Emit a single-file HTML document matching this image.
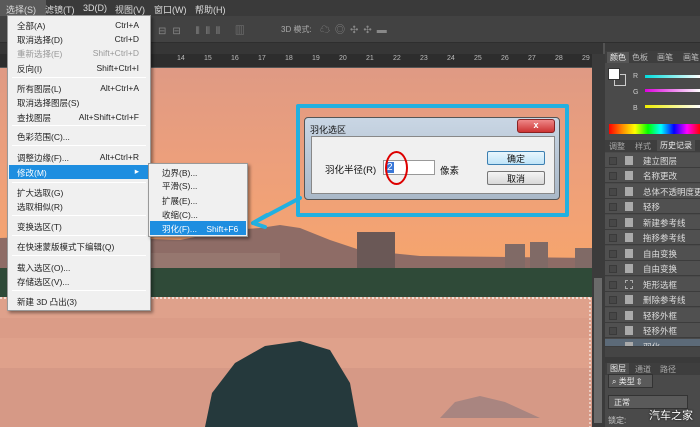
<!DOCTYPE html>
<html style="overflow:hidden;height:427px"><head><meta charset="utf-8"><style>
*{margin:0;padding:0;box-sizing:border-box}
body{width:700px;height:427px;overflow:hidden;background:#535353;font-family:"Liberation Sans","Noto Sans CJK SC",sans-serif;font-size:9px;position:relative;color:#ddd}
.abs{position:absolute}
#menubar{left:0;top:0;width:700px;height:16px;background:#3a3a3a;}
#menubar span{position:absolute;top:3px;color:#ddd;font-size:9px}
#opts{left:0;top:16px;width:700px;height:27px;background:#424242;border-bottom:1px solid #2e2e2e}
#tabs{left:0;top:43px;width:603px;height:11px;background:#363636}
#ruler{left:0;top:54px;width:592px;height:14px;background:#2d2d2d;border-bottom:1px solid #555}
#ruler span{position:absolute;top:1px;font-size:7px;color:#bbb}
#canvas{left:0;top:68px;width:592px;height:359px;overflow:hidden;background:linear-gradient(180deg,#df9a84 0%,#ec9f7c 25%,#f3a373 45%,#f6a46c 55%)}
#menu{left:7px;top:15px;width:144px;height:296px;background:#f0f0f0;border:1px solid #999;box-shadow:2px 2px 3px rgba(0,0,0,.4)}
.mi{position:absolute;left:9px;color:#222;font-size:8.5px;white-space:nowrap}
.sc{position:absolute;right:11px;color:#222;font-size:8.5px}
.sep{position:absolute;left:4px;right:4px;height:1px;background:#c8c8c8;border-bottom:1px solid #fff}
#sub{left:148px;top:163px;width:100px;height:74px;background:#f0f0f0;border:1px solid #999;box-shadow:2px 2px 3px rgba(0,0,0,.4)}
#panel{left:605px;top:43px;width:95px;height:384px;background:#4a4a4a;overflow:hidden}
.hr{position:absolute;left:0;width:95px;height:15px;border-bottom:1px solid #3c3c3c;background:#505050}
.hr i{position:absolute;left:4px;top:4px;width:8px;height:8px;border:1px solid #3a3a3a;background:#474747}
.hr b{position:absolute;left:20px;top:3px;width:8px;height:9px;background:#aaa}
.hr span{position:absolute;left:38px;top:2px;color:#ddd;font-size:8.5px;white-space:nowrap}
</style></head><body>
<div id="menubar" class="abs">
<span style="left:0;top:0;height:16px;width:46px;background:#5a5a5a"></span>
<span style="left:6px">选择(S)</span><span style="left:45px">滤镜(T)</span><span style="left:83px">3D(D)</span><span style="left:115px">视图(V)</span><span style="left:154px">窗口(W)</span><span style="left:195px">帮助(H)</span>
</div>
<div id="opts" class="abs">
<span class="abs" style="left:158px;top:6px;color:#888;font-size:10px;letter-spacing:6px">⊟⊟ ⫴⫴⫴ ▥</span>
<span class="abs" style="left:281px;top:8px;color:#aaa;font-size:8px">3D 模式:</span>
<span class="abs" style="left:320px;top:5px;color:#888;font-size:10px;letter-spacing:5px">☁◎✣✣▬</span>
</div>
<div id="tabs" class="abs"></div>
<div id="ruler" class="abs">
<span style="left:177px">14</span><span style="left:204px">15</span><span style="left:231px">16</span><span style="left:258px">17</span><span style="left:285px">18</span><span style="left:312px">19</span><span style="left:339px">20</span><span style="left:366px">21</span><span style="left:393px">22</span><span style="left:420px">23</span><span style="left:447px">24</span><span style="left:474px">25</span><span style="left:501px">26</span><span style="left:528px">27</span><span style="left:555px">28</span><span style="left:582px">29</span>
</div>
<div id="canvas" class="abs">
<svg class="abs" style="left:0;top:0" width="592" height="359">
<path d="M0 170 L60 168 L180 172 L230 162 L260 160 L280 157 L300 160 L330 172 L360 182 L420 188 L592 190 L592 215 L0 215Z" fill="#8e6c66"/>
<rect x="10" y="168" width="45" height="50" fill="#7a605c"/>
<rect x="357" y="164" width="38" height="50" fill="#6a5856"/>
<rect x="505" y="176" width="20" height="38" fill="#806a66"/>
<rect x="530" y="174" width="18" height="40" fill="#806a66"/>
<rect x="575" y="180" width="17" height="34" fill="#806a66"/>
<rect x="80" y="185" width="200" height="25" fill="#9a7c74" opacity=".7"/>
<rect x="0" y="200" width="592" height="30" fill="#2f4a38"/>
<rect x="0" y="229" width="592" height="130" fill="#dfa18b"/>
<rect x="0" y="250" width="592" height="20" fill="#d99a86" opacity=".6"/>
<rect x="0" y="300" width="592" height="59" fill="#d09484" opacity=".6"/>
<path d="M0 230 L592 230" stroke="#fff" stroke-width="1.2" stroke-dasharray="2 2"/>
<path d="M590 230 L590 359" stroke="#fff" stroke-width="1" stroke-dasharray="2 2"/>
<path d="M205 359 L212 325 L235 295 L265 278 L300 273 L330 282 L350 315 L358 359Z" fill="#25393c"/>
<path d="M440 350 L455 334 L480 328 L505 334 L540 350Z" fill="#a98580"/>
</svg>
</div>
<div class="abs" style="left:592px;top:54px;width:13px;height:373px;background:#3b3b3b"></div>
<div class="abs" style="left:594px;top:278px;width:8px;height:145px;background:#6a6a6a"></div>
<div class="abs" style="left:296px;top:104px;width:273px;height:113px;border:4px solid #22b0e0;border-radius:2px"></div>
<svg class="abs" style="left:245px;top:195px" width="60" height="40"><path d="M55 3 L8 28 M8 28 L22 20 M8 28 L20 32" stroke="#22b0e0" stroke-width="4" fill="none" stroke-linecap="round"/></svg>
<div class="abs" style="left:304px;top:117px;width:256px;height:83px;background:linear-gradient(180deg,#c9d6e4,#a9b8c8);border:1px solid #555;border-radius:4px">
<span class="abs" style="left:5px;top:5px;color:#111;font-size:9px">羽化选区</span>
<div class="abs" style="left:212px;top:1px;width:38px;height:14px;background:linear-gradient(#e88,#c33);border:1px solid #822;border-radius:3px;color:#fff;text-align:center;font-size:9px;font-weight:bold">x</div>
<div class="abs" style="left:6px;top:18px;width:244px;height:58px;background:#f0f0f0;border:1px solid #888"></div>
<span class="abs" style="left:20px;top:44px;color:#111;font-size:9.5px">羽化半径(R)</span>
<div class="abs" style="left:78px;top:42px;width:52px;height:15px;background:#fff;border:1px solid #999"><span style="position:absolute;left:2px;top:1px;background:#3a78d8;color:#fff;font-size:10px;padding:0 1px">2</span></div>
<div class="abs" style="left:80px;top:33px;width:23px;height:34px;border:2.5px solid #d00;border-radius:50%"></div>
<span class="abs" style="left:135px;top:45px;color:#111;font-size:9.5px">像素</span>
<div class="abs" style="left:182px;top:33px;width:58px;height:14px;background:linear-gradient(#e8f6fd,#bfe4f8);border:1px solid #3c7fb1;border-radius:2px;text-align:center;color:#111;font-size:9px">确定</div>
<div class="abs" style="left:182px;top:53px;width:58px;height:14px;background:linear-gradient(#f4f4f4,#d8d8d8);border:1px solid #777;border-radius:2px;text-align:center;color:#111;font-size:9px">取消</div>
</div>
<div id="menu" class="abs">
<span class="mi" style="top:4px">全部(A)</span><span class="sc" style="top:4px">Ctrl+A</span>
<span class="mi" style="top:18px">取消选择(D)</span><span class="sc" style="top:18px">Ctrl+D</span>
<span class="mi" style="top:32px;color:#999">重新选择(E)</span><span class="sc" style="top:32px;color:#999">Shift+Ctrl+D</span>
<span class="mi" style="top:47px">反向(I)</span><span class="sc" style="top:47px">Shift+Ctrl+I</span>
<div class="sep" style="top:61px"></div>
<span class="mi" style="top:67px">所有图层(L)</span><span class="sc" style="top:67px">Alt+Ctrl+A</span>
<span class="mi" style="top:81px">取消选择图层(S)</span>
<span class="mi" style="top:96px">查找图层</span><span class="sc" style="top:96px">Alt+Shift+Ctrl+F</span>
<div class="sep" style="top:109px"></div>
<span class="mi" style="top:115px">色彩范围(C)...</span>
<div class="sep" style="top:129px"></div>
<span class="mi" style="top:136px">调整边缘(F)...</span><span class="sc" style="top:136px">Alt+Ctrl+R</span>
<div class="abs" style="left:1px;top:149px;width:140px;height:14px;background:#1e8ee0"></div>
<span class="mi" style="top:151px;color:#fff">修改(M)</span><span class="sc" style="top:150px;color:#fff">▸</span>
<div class="sep" style="top:166px"></div>
<span class="mi" style="top:171px">扩大选取(G)</span>
<span class="mi" style="top:185px">选取相似(R)</span>
<div class="sep" style="top:199px"></div>
<span class="mi" style="top:205px">变换选区(T)</span>
<div class="sep" style="top:219px"></div>
<span class="mi" style="top:225px">在快速蒙版模式下编辑(Q)</span>
<div class="sep" style="top:239px"></div>
<span class="mi" style="top:246px">载入选区(O)...</span>
<span class="mi" style="top:260px">存储选区(V)...</span>
<div class="sep" style="top:274px"></div>
<span class="mi" style="top:280px">新建 3D 凸出(3)</span>
</div>
<div id="sub" class="abs">
<span class="mi" style="top:3px;left:13px">边界(B)...</span>
<span class="mi" style="top:16px;left:13px">平滑(S)...</span>
<span class="mi" style="top:31px;left:13px">扩展(E)...</span>
<span class="mi" style="top:45px;left:13px">收缩(C)...</span>
<div class="abs" style="left:1px;top:57px;width:96px;height:14px;background:#1e8ee0"></div>
<span class="mi" style="top:59px;left:13px;color:#fff">羽化(F)...&nbsp;&nbsp;&nbsp;&nbsp;Shift+F6</span>
</div>
<div id="panel" class="abs">
<div class="abs" style="left:0;top:0;width:95px;height:8px;background:#3a3a3a"></div>
<div class="abs" style="left:0;top:8px;width:95px;height:12px;background:#3e3e3e;font-size:8px;color:#bbb"><span style="position:absolute;left:2px;top:1px;background:#555;padding:0 3px;color:#eee">颜色</span><span style="position:absolute;left:27px;top:1px">色板</span><span style="position:absolute;left:52px;top:1px">画笔</span><span style="position:absolute;left:78px;top:1px">画笔</span></div>
<div class="abs" style="left:9px;top:31px;width:12px;height:12px;border:1px solid #ccc;background:#4a4a4a"></div>
<div class="abs" style="left:3px;top:25px;width:12px;height:12px;background:#fff;border:1px solid #333"></div>
<span class="abs" style="left:28px;top:30px;font-size:7px;color:#ccc">R</span><div class="abs" style="left:40px;top:32px;width:55px;height:3px;background:linear-gradient(90deg,#0dd,#fff)"></div>
<span class="abs" style="left:28px;top:46px;font-size:7px;color:#ccc">G</span><div class="abs" style="left:40px;top:46px;width:55px;height:3px;background:linear-gradient(90deg,#d0d,#fff)"></div>
<span class="abs" style="left:28px;top:62px;font-size:7px;color:#ccc">B</span><div class="abs" style="left:40px;top:62px;width:55px;height:3px;background:linear-gradient(90deg,#ee0,#fff)"></div>
<div class="abs" style="left:4px;top:81px;width:91px;height:10px;background:linear-gradient(90deg,#f00,#f80,#ff0,#0f0,#0ff,#00f,#f0f,#f00)"></div>
<div class="abs" style="left:0;top:97px;width:95px;height:12px;background:#3e3e3e;font-size:8px;color:#aaa"><span style="position:absolute;left:4px;top:1px">调整</span><span style="position:absolute;left:30px;top:1px">样式</span><span style="position:absolute;left:52px;top:0;background:#4e4e4e;padding:0 3px;color:#eee">历史记录</span></div>
<div class="hr" style="top:110px"><i></i><b></b><span>建立图层</span></div>
<div class="hr" style="top:125px"><i></i><b></b><span>名称更改</span></div>
<div class="hr" style="top:141px"><i></i><b></b><span>总体不透明度更</span></div>
<div class="hr" style="top:156px"><i></i><b></b><span>轻移</span></div>
<div class="hr" style="top:172px"><i></i><b></b><span>新建参考线</span></div>
<div class="hr" style="top:187px"><i></i><b></b><span>拖移参考线</span></div>
<div class="hr" style="top:203px"><i></i><b></b><span>自由变换</span></div>
<div class="hr" style="top:218px"><i></i><b></b><span>自由变换</span></div>
<div class="hr" style="top:234px"><i></i><b style="background:none;border:1px dashed #aaa"></b><span>矩形选框</span></div>
<div class="hr" style="top:249px"><i></i><b></b><span>删除参考线</span></div>
<div class="hr" style="top:265px"><i></i><b></b><span>轻移外框</span></div>
<div class="hr" style="top:280px"><i></i><b></b><span>轻移外框</span></div>
<div class="hr" style="top:296px;height:8px;background:#5c6a78;overflow:hidden"><b></b><span>羽化</span></div>
<div class="abs" style="left:0;top:304px;width:95px;height:10px;background:#454545"></div>
<div class="abs" style="left:0;top:314px;width:95px;height:6px;background:#3a3a3a"></div>
<div class="abs" style="left:0;top:320px;width:95px;height:12px;background:#3e3e3e;font-size:8px;color:#aaa"><span style="position:absolute;left:2px;top:0;background:#4e4e4e;padding:0 3px;color:#eee">图层</span><span style="position:absolute;left:30px;top:1px">通道</span><span style="position:absolute;left:55px;top:1px">路径</span></div>
<div class="abs" style="left:3px;top:331px;width:45px;height:14px;background:#5a5a5a;border:1px solid #333;font-size:8px;color:#eee;padding:1px 3px;white-space:nowrap">⌕ 类型 ⇕</div>
<div class="abs" style="left:3px;top:352px;width:80px;height:14px;background:#5a5a5a;border:1px solid #333;font-size:8px;color:#eee;padding:1px 5px">正常</div>
<span class="abs" style="left:3px;top:372px;font-size:8px;color:#ccc;white-space:nowrap">锁定:</span>
<span class="abs" style="left:44px;top:364px;font-size:11px;color:#fff;text-shadow:0 0 2px #000;white-space:nowrap">汽车之家</span>
</div>
</body></html>
